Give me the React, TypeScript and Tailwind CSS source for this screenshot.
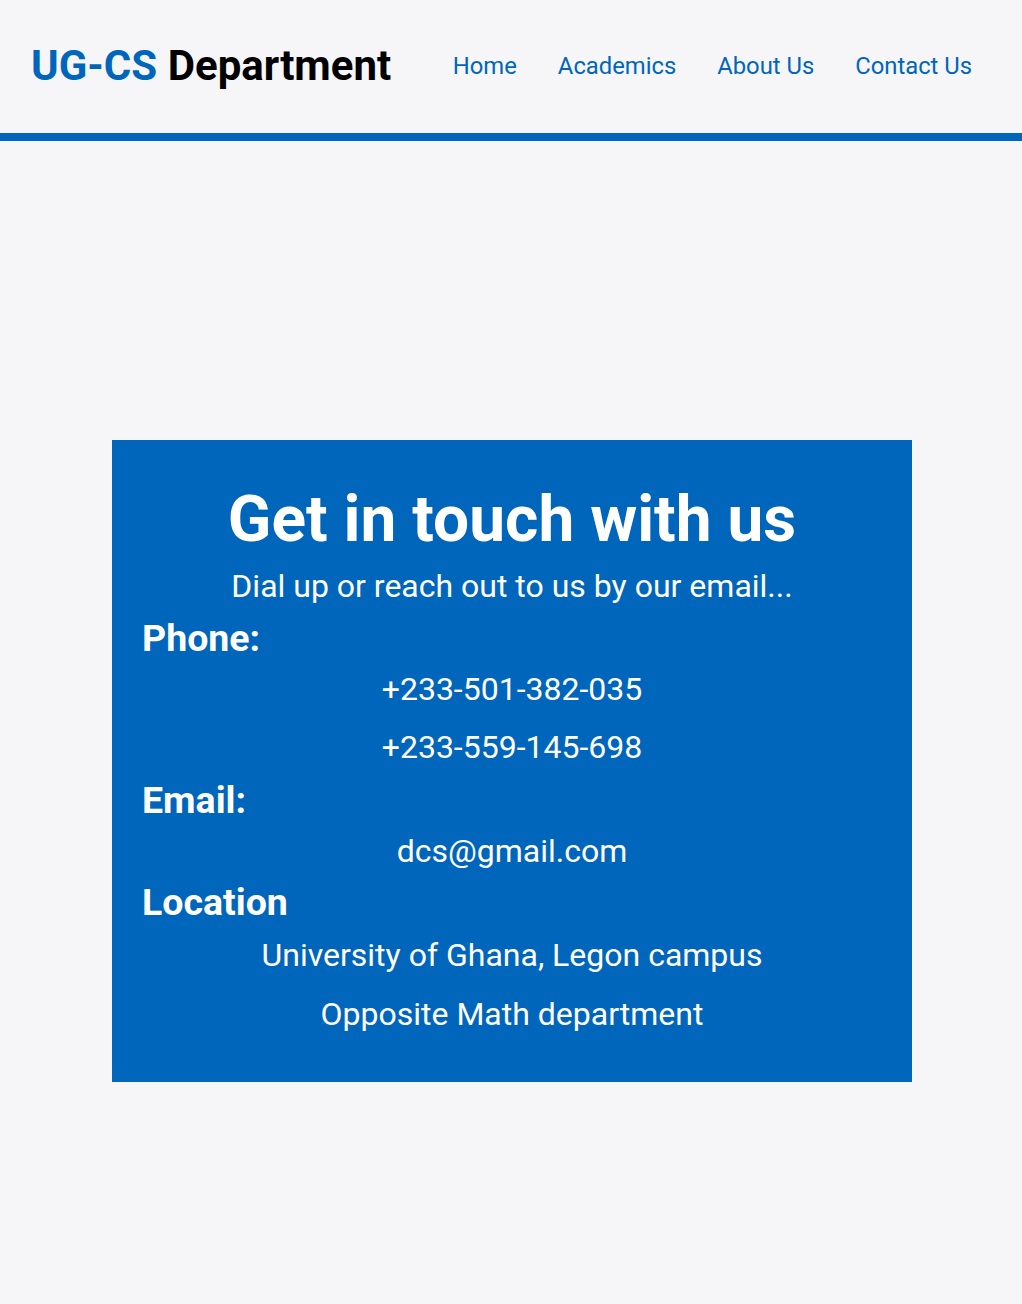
export default function App() {
  return (
    <div className="min-h-[1304px] bg-[#f6f6f8]" style={{ fontFamily: 'Roboto, "Liberation Sans", sans-serif' }}>
      {/* Header */}
      <header className="h-[141px] border-b-8 border-[#0066bb] flex items-start justify-between pl-[31px] pr-[50px]">
        <h1 className="mt-[45px] text-[42px] leading-none font-bold text-black">
          <span className="text-[#0066bb]">UG-CS</span> Department
        </h1>
        <nav className="mt-[55px] flex gap-[41px] text-[23.8px] leading-none text-[#0066bb]">
          <a href="#">Home</a>
          <a href="#">Academics</a>
          <a href="#">About Us</a>
          <a href="#">Contact Us</a>
        </nav>
      </header>

      {/* Contact card */}
      <main className="pt-[299px] pl-[112px]">
        <section className="w-[800px] bg-[#0066bb] text-white px-[30px] pt-[48px] pb-[52px]">
          <h2 className="text-center text-[64px] leading-none font-bold">Get in touch with us</h2>
          <p className="mt-[18px] text-center text-[32px] leading-none">Dial up or reach out to us by our email...</p>

          <h3 className="mt-[18px] text-[37.5px] leading-none font-bold">Phone:</h3>
          <p className="mt-[15px] text-center text-[32px] leading-none">+233-501-382-035</p>
          <p className="mt-[26px] text-center text-[32px] leading-none">+233-559-145-698</p>

          <h3 className="mt-[19px] text-[37.5px] leading-none font-bold">Email:</h3>
          <p className="mt-[16px] text-center text-[32px] leading-none">dcs@gmail.com</p>

          <h3 className="mt-[17px] text-[37.5px] leading-none font-bold">Location</h3>
          <p className="mt-[17px] text-center text-[32px] leading-none">University of Ghana, Legon campus</p>
          <p className="mt-[27px] text-center text-[32px] leading-none">Opposite Math department</p>
        </section>
      </main>
    </div>
  );
}
